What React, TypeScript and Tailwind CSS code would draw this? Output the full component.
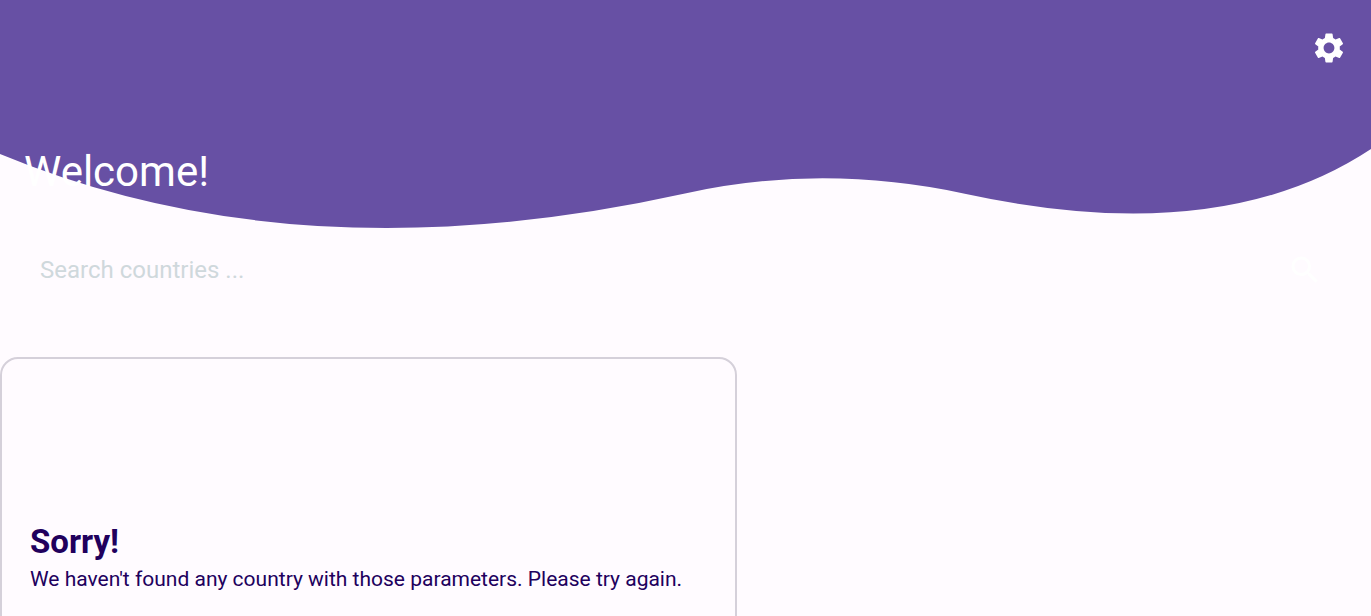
import { MdSearch, MdSettings } from "react-icons/md";

function Header() {
  return (
    <header className="relative h-[228px]">
      <svg
        className="absolute inset-0 h-full w-full"
        viewBox="0 0 1371 228"
        preserveAspectRatio="none"
        aria-hidden="true"
      >
        <path
          fill="#6750a4"
          d="M0 0V154Q300 278.500 685 193.500Q822 163 966 194Q1220 249 1371 149V0Z"
        />
      </svg>
      <div className="relative flex h-full flex-col justify-between px-6 pt-[30px] pb-[31px]">
        <button type="button" aria-label="Settings" className="self-end text-white">
          <MdSettings size={36} />
        </button>
        <h1 className="text-[42px] leading-[50px] text-white">Welcome!</h1>
      </div>
    </header>
  );
}

function SearchBar() {
  return (
    <form role="search" className="flex h-[84px] items-center pr-12 pl-10">
      <input
        type="text"
        aria-label="Search countries"
        placeholder="Search countries ..."
        className="min-w-0 flex-1 bg-transparent text-2xl text-[#1d1b20] outline-none placeholder:text-[#cfd8dc]"
      />
      <button type="button" aria-label="Search" className="text-white">
        <MdSearch size={36} />
      </button>
    </form>
  );
}

function EmptyCard() {
  return (
    <section className="mt-[45px] w-[737px] max-w-full rounded-[18px] border-2 border-[#d5d0da] px-7 pt-[162px] pb-16 text-[#21005d]">
      <h2 className="text-[33px] leading-[42px] font-bold">Sorry!</h2>
      <p className="text-[21px] leading-8">
        We haven't found any country with those parameters. Please try again.
      </p>
    </section>
  );
}

export default function App() {
  return (
    <main className="h-screen overflow-x-hidden overflow-y-auto bg-[#fffbff] font-['Roboto',sans-serif] [scrollbar-width:none]">
      <Header />
      <SearchBar />
      <EmptyCard />
    </main>
  );
}
